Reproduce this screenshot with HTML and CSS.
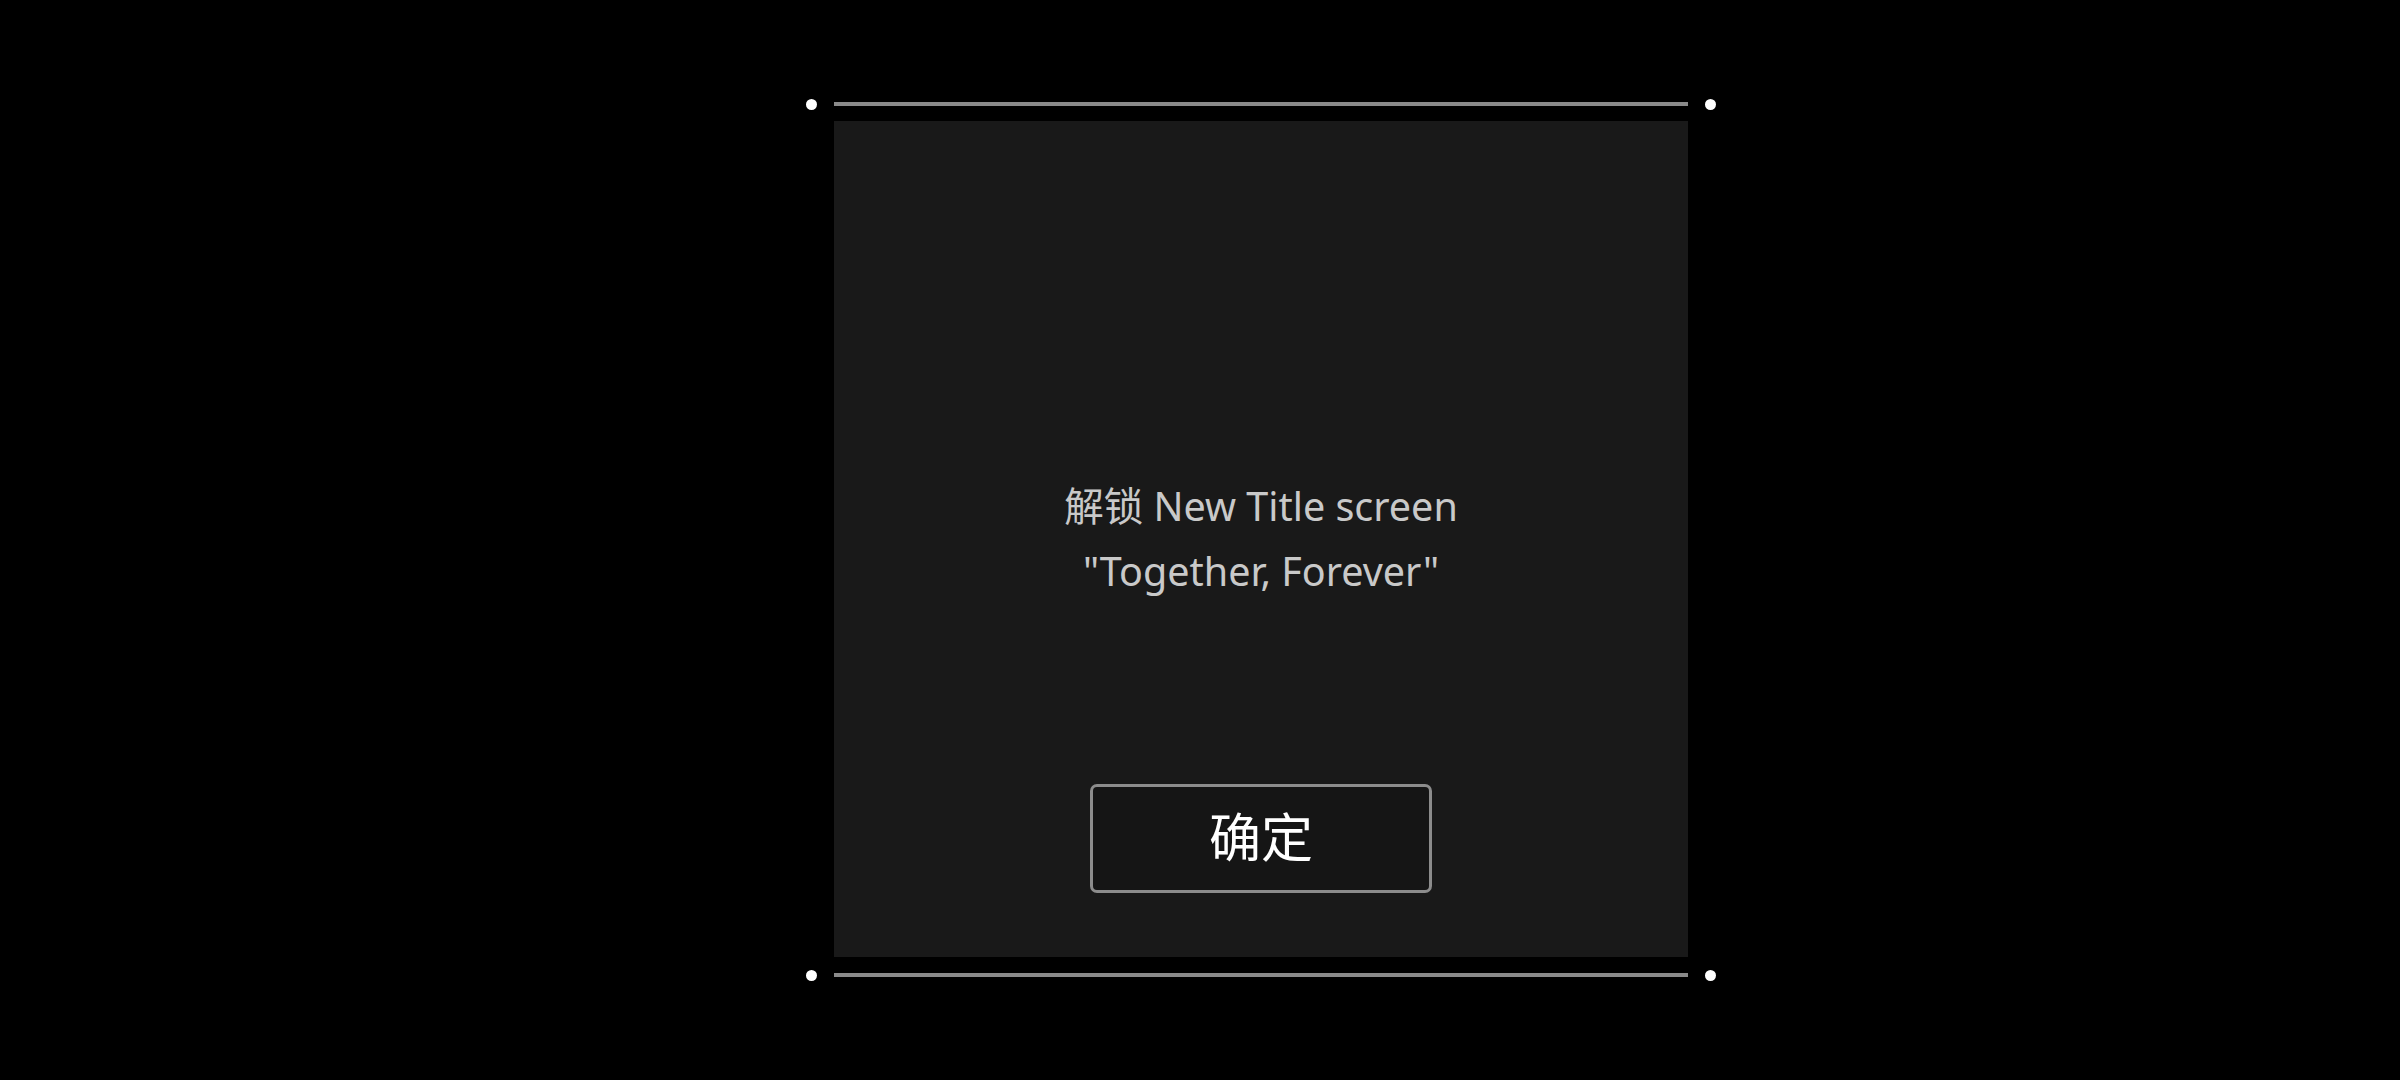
FILE: index.html
```html
<!DOCTYPE html>
<html lang="zh">
<head>
<meta charset="utf-8">
<link rel="stylesheet" href="styles.css">
</head>
<body>
<div class="frame">
  <div class="rule">
    <span class="dot"></span><span class="line"></span><span class="dot"></span>
  </div>
  <div class="panel">
    <div class="message">
      <div class="msg-line">解锁 New Title screen</div>
      <div class="msg-line">"Together, Forever"</div>
    </div>
    <button class="confirm">确定</button>
  </div>
  <div class="rule rule-bottom">
    <span class="dot"></span><span class="line"></span><span class="dot"></span>
  </div>
</div>
</body>
</html>
```

FILE: styles.css
```css
html, body {
  margin: 0;
  padding: 0;
  background: #000;
  width: 2400px;
  height: 1080px;
  overflow: hidden;
}
.frame {
  margin-left: 806px;
  padding-top: 98px;
  width: 910px;
  display: flex;
  flex-direction: column;
}
.rule {
  display: flex;
  align-items: center;
  gap: 17px;
  height: 12px;
}
.dot {
  width: 11px;
  height: 11px;
  border-radius: 50%;
  background: #fff;
  flex: none;
}
.line {
  flex: 1;
  height: 4px;
  background: #8a8a8a;
}
.panel {
  margin: 11px 28px 12px;
  height: 836px;
  background: #191919;
  display: flex;
  flex-direction: column;
  align-items: center;
  box-sizing: border-box;
  padding-top: 353px;
}
.message {
  font-family: "Noto Sans", "Noto Sans CJK SC", sans-serif;
  font-size: 39.5px;
  line-height: 65px;
  color: #c9c9c9;
  text-align: center;
}
.msg-line {
  height: 65px;
  white-space: nowrap;
}
.confirm {
  margin-top: 180px;
  width: 342px;
  height: 109px;
  box-sizing: border-box;
  border: 3px solid #8c8c8c;
  border-radius: 7px;
  background: #151515;
  color: #fff;
  font-family: "Noto Sans CJK SC", sans-serif;
  font-size: 52px;
  padding: 0 0 8px;
  line-height: 1;
}
```
